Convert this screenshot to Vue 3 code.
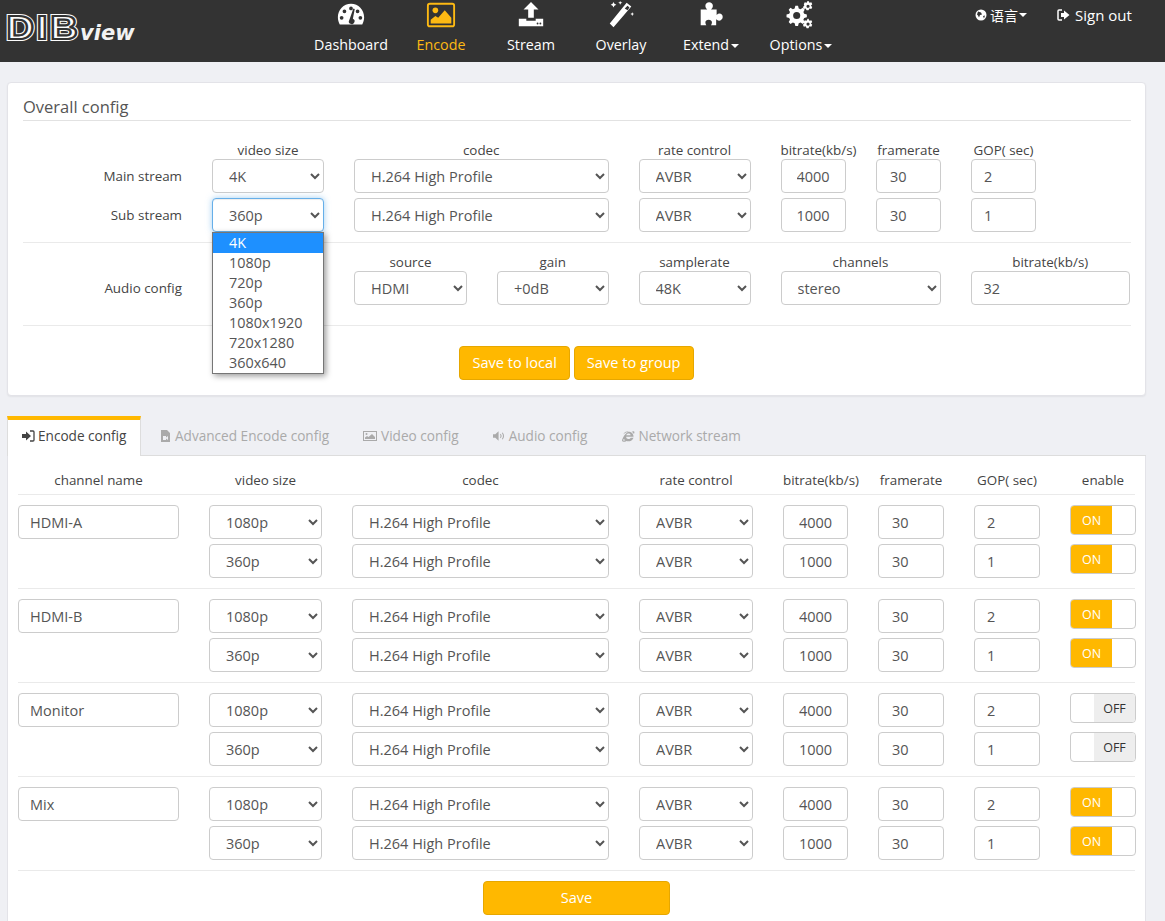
<script setup>
const sizes = ['4K', '1080p', '720p', '360p', '1080x1920', '720x1280', '360x640']
const topRows = [
  { label: 'Main stream', size: '4K', bitrate: 4000, gop: 2 },
  { label: 'Sub stream', size: '360p', bitrate: 1000, gop: 1, focus: true },
]
const tabs = [
  { label: 'Encode config', icon: 'enter', active: true },
  { label: 'Advanced Encode config', icon: 'file' },
  { label: 'Video config', icon: 'image' },
  { label: 'Audio config', icon: 'sound' },
  { label: 'Network stream', icon: 'ie' },
]
const channels = [
  { name: 'HDMI-A', on: true },
  { name: 'HDMI-B', on: true },
  { name: 'Monitor', on: false },
  { name: 'Mix', on: true },
]
const streams = [
  { size: '1080p', bitrate: 4000, gop: 2 },
  { size: '360p', bitrate: 1000, gop: 1 },
]
</script>

<template>
  <div class="page">
    <header class="nav">
      <div class="logo">
        <svg width="75" height="36" viewBox="0 0 75 36">
          <defs><text id="dib" x="0.500" y="29" class="dibtext">DIB</text></defs>
          <g transform="scale(1.12 1)">
            <use href="#dib" fill="#fff" stroke="#fff" stroke-width="4.200" />
            <use href="#dib" fill="none" stroke="#333" stroke-width="2.200" />
          </g>
        </svg>
        <span class="view">view</span>
      </div>
      <nav class="menu">
        <a class="item"><svg class="ico" viewBox="0 0 32 32"><path fill="#fff" fill-rule="evenodd" d="M16 4C8 4 2 10.500 2 18.500c0 2.800.8 5.200 2 7.500h24c1.200-2.300 2-4.700 2-7.500C30 10.500 24 4 16 4ZM16 7a2 2 0 1 1 0 4 2 2 0 0 1 0-4ZM9 10a2 2 0 1 1 0 4 2 2 0 0 1 0-4ZM23 10a2 2 0 1 1 0 4 2 2 0 0 1 0-4ZM6 17a2 2 0 1 1 0 4 2 2 0 0 1 0-4ZM26 17a2 2 0 1 1 0 4 2 2 0 0 1 0-4ZM18.500 9l1.500.5-2 10.500a3 3 0 1 1-3.800 1.200Z"/></svg><span>Dashboard</span></a>
        <a class="item active"><svg class="ico" viewBox="0 0 32 32"><rect x="2" y="4" width="28" height="24" rx="2" fill="none" stroke="#fdb913" stroke-width="2"/><circle cx="10" cy="11" r="3" fill="#fdb913"/><path fill="#fdb913" d="M5 25v-4l5-4 3 2 7-8 7 8v6Z"/></svg><span>Encode</span></a>
        <a class="item"><svg class="ico" viewBox="0 0 32 32"><path fill="#fff" d="M16 2l8 8h-5v9h-6v-9H8ZM3 20h8v2h10v-2h8v8H3Z"/><circle cx="23" cy="25" r="1" fill="#333"/><circle cx="26" cy="25" r="1" fill="#333"/></svg><span>Stream</span></a>
        <a class="item"><svg class="ico" viewBox="0 0 32 32"><path fill="#fff" d="M22 3l5 4L8 29l-4-4ZM20 9l3 2 2-3-2-2Z"/><path fill="#fff" d="M8 2l1 2 2 1-2 1-1 2-1-2-2-1 2-1ZM15 1l1 1.500 1.500.5-1.500.5-1 1.500-.5-1.500L13 3l1.500-.5ZM28 13l.7 1.500 1.300.5-1.300.5-.7 1.500-.7-1.500-1.300-.5 1.300-.5Z"/></svg><span>Overlay</span></a>
        <a class="item"><svg class="ico" viewBox="0 0 32 32"><path fill="#fff" d="M5 10h7c-1-1-2-2-2-4 0-2 2-3.500 4-3.500s4 1.500 4 3.500c0 2-1 3-2 4h6v6c1-1 2-1.500 3-1.500 2 0 3.500 1.500 3.500 3.500S26.500 22 24.500 22c-1 0-2-.5-3-1.500V27H16c.5-1 1-2 1-3 0-2-1.500-3-3.500-3S10 22 10 24c0 1 .5 2 1 3H5Z"/></svg><span>Extend<i class="caret"></i></span></a>
        <a class="item"><svg class="ico wide" viewBox="0 0 32 32"><path fill="#fff" fill-rule="evenodd" d="M12 8l1.500 0 .8 3 2 .9 2.700-1.500 2 2-1.500 2.700.9 2 3 .8v3l-3 .8-.9 2 1.500 2.700-2 2-2.700-1.500-2 .9-.8 3h-3l-.8-3-2-.9-2.700 1.500-2-2 1.500-2.700-.9-2-3-.8v-3l3-.8.9-2-1.500-2.700 2-2 2.700 1.500 2-.9.8-3ZM12 15a4 4 0 1 0 0 8 4 4 0 0 0 0-8Z" transform="translate(0 -1.500) scale(.95)"/><path fill="#fff" fill-rule="evenodd" d="M24 1l1 2 2-.5 1 2-1.500 1.500 1.500 1.500-1 2-2-.5-1 2h-2l-1-2-2 .5-1-2 1.500-1.500L19 4.500l1-2 2 .5 1-2ZM23.500 5a1.700 1.700 0 1 0 0 3.400 1.700 1.700 0 0 0 0-3.400ZM24 20l1 2 2-.5 1 2-1.500 1.500 1.500 1.500-1 2-2-.5-1 2h-2l-1-2-2 .5-1-2 1.500-1.500L19 23.500l1-2 2 .5 1-2ZM23.500 24a1.700 1.700 0 1 0 0 3.400 1.700 1.700 0 0 0 0-3.400Z"/></svg><span>Options<i class="caret"></i></span></a>
      </nav>
      <div class="right">
        <a class="lang"><svg width="12" height="12" viewBox="0 0 12 12"><circle cx="6" cy="6" r="5.500" fill="#fff"/><path fill="#333" d="M3 2.500l3 1 1 2-2 .5-1 2.500-1-2-1-1ZM8 7l2-.5-1 3Z"/></svg><span>语言</span><i class="caret"></i></a>
        <a class="signout"><svg width="13" height="12" viewBox="0 0 13 12"><path fill="none" stroke="#fff" stroke-width="1.500" d="M5 1H2a1 1 0 0 0-1 1v8a1 1 0 0 0 1 1h3"/><path fill="#fff" d="M7 1.500L12.500 6 7 10.500V8H4V4h3Z"/></svg><span>Sign out</span></a>
      </div>
    </header>

    <main class="main">
      <section class="card">
        <h2 class="title">Overall config</h2>
        <div class="topgrid heads">
          <span></span><span>video size</span><span>codec</span><span>rate control</span><span>bitrate(kb/s)</span><span>framerate</span><span>GOP( sec)</span>
        </div>
        <div v-for="r in topRows" :key="r.label" class="topgrid row">
          <label>{{ r.label }}</label>
          <div class="sizewrap">
            <select class="ctl" :class="{ focus: r.focus }"><option v-for="s in sizes" :key="s" :selected="s === r.size">{{ s }}</option></select>
          </div>
          <select class="ctl"><option>H.264 High Profile</option></select>
          <select class="ctl"><option>AVBR</option></select>
          <input class="ctl num" :value="r.bitrate" />
          <input class="ctl fr" value="30" />
          <input class="ctl" :value="r.gop" />
        </div>
        <hr class="sep first" />
        <div class="audio heads">
          <span></span><span></span><span>source</span><span>gain</span><span>samplerate</span><span>channels</span><span>bitrate(kb/s)</span>
        </div>
        <div class="audio row">
          <label>Audio config</label><span></span>
          <select class="ctl"><option>HDMI</option></select>
          <select class="ctl"><option>+0dB</option></select>
          <select class="ctl"><option>48K</option></select>
          <select class="ctl"><option>stereo</option></select>
          <input class="ctl" value="32" />
        </div>
        <hr class="sep second" />
        <div class="actions">
          <button class="btn">Save to local</button>
          <button class="btn">Save to group</button>
        </div>

        <ul class="dropdown">
          <li v-for="(s, i) in sizes" :key="s" :class="{ hl: i === 0 }">{{ s }}</li>
        </ul>
      </section>

      <div class="tabs">
        <a v-for="t in tabs" :key="t.label" class="tab" :class="{ active: t.active, wideg: t.icon === 'image' }">
          <svg v-if="t.icon === 'enter'" viewBox="0 0 13 12"><path fill="currentColor" d="M0 4h4V1.500L9 6l-5 4.500V8H0Z"/><path fill="none" stroke="currentColor" stroke-width="1.300" d="M8 1h3a1 1 0 0 1 1 1v8a1 1 0 0 1-1 1H8"/></svg>
          <svg v-else-if="t.icon === 'file'" viewBox="0 0 13 12"><path fill="currentColor" d="M2 0h6l3 3v9H2ZM4 6v4h3V8.500L9 10V6L7 7.500V6Z" fill-rule="evenodd"/></svg>
          <svg v-else-if="t.icon === 'image'" class="w14" viewBox="0 0 14 12"><path fill="currentColor" fill-rule="evenodd" d="M0 1h14v10H0ZM1 2v8h12V2Z"/><circle cx="3.500" cy="4" r="1" fill="currentColor"/><path fill="currentColor" d="M2 9V7.500L4 6l1.500 1L9 4l3 3v2Z"/></svg>
          <svg v-else-if="t.icon === 'sound'" viewBox="0 0 14 12"><path fill="currentColor" d="M0 4h2.500L6 1v10L2.500 8H0Z"/><path fill="none" stroke="currentColor" stroke-width="1.100" d="M8 4c.8 1 .8 3 0 4M10 2.500c1.500 2 1.500 5 0 7"/></svg>
          <svg v-else class="w14" viewBox="0 0 14 13"><path fill="currentColor" fill-rule="evenodd" d="M7.500 2C10.500 2 13 4.200 13 7.300H5c0 3 4 3 5 1h3c-1 3-4 4-5.500 4-.8 0-1.500-.2-2-.4C3.500 13 1 13.300 .6 12c-.3-1 .3-2.500 1-3.700C3 5.500 5 3.500 7 2.300 5 2.300 2.500 4 2 5c.3-2 3-4 5.500-3ZM5.100 5.800h4.800c-.2-2.500-4.300-2.500-4.800 0ZM2.300 9.800c-.8 1.500-.9 2.500 1.800 1.300-.8-.4-1.400-.9-1.800-1.300ZM11 2c1.500-1 3-1.200 3 .5 0 .5-.3 1.200-.5 1.800-.5-1-1.500-1.800-2.500-2.300Z"/></svg>
          <span>{{ t.label }}</span>
        </a>
      </div>
      <section class="panel">
        <div class="tablegrid heads">
          <span>channel name</span><span>video size</span><span>codec</span><span>rate control</span><span>bitrate(kb/s)</span><span>framerate</span><span>GOP( sec)</span><span>enable</span>
        </div>
        <div v-for="c in channels" :key="c.name" class="group">
          <div v-for="(s, i) in streams" :key="i" class="tablegrid line">
            <input v-if="i === 0" class="ctl name" :value="c.name" />
            <span v-else></span>
            <select class="ctl"><option>{{ s.size }}</option></select>
            <select class="ctl"><option>H.264 High Profile</option></select>
            <select class="ctl"><option>AVBR</option></select>
            <input class="ctl num" :value="s.bitrate" />
            <input class="ctl fr" value="30" />
            <input class="ctl" :value="s.gop" />
            <div class="switch" :class="c.on ? 'on' : 'off'">
              <b>{{ c.on ? 'ON' : 'OFF' }}</b>
            </div>
          </div>
        </div>
        <div class="saverow"><button class="btn save">Save</button></div>
      </section>
    </main>
  </div>
</template>

<style>
html, body { background: #eff0f4; }
</style>

<style scoped>
.page { font-family: "Open Sans", "Noto Sans CJK SC", sans-serif; font-size: 13.400px; color: #444; width: 1165px; height: 921px; overflow: hidden; background: #eff0f4; }
.nav { height: 62px; background: #333; display: flex; color: #fff; position: relative; }
.logo { width: 306px; padding: 10px 0 0 6px; display: flex; align-items: flex-start; box-sizing: border-box; }
.logo svg { display: block; flex: none; opacity: .99; }
.dibtext { font-family: "Liberation Sans", sans-serif; font-weight: 700; font-size: 34px; letter-spacing: 2.500px; }
.view { font-family: "DejaVu Sans", sans-serif; font-style: italic; font-weight: 700; font-size: 21px; color: #f2f2f2; margin: 11px 0 0 -1px; }
.menu { display: flex; }
.item { width: 90px; display: flex; flex-direction: column; align-items: center; font-size: 14.300px; white-space: nowrap; }
.item.active { color: #fdb913; }
.ico { width: 30px; height: 30px; margin-bottom: 5px; display: block; }
.ico.wide { width: 32px; }
.caret { display: inline-block; width: 0; height: 0; border: 4px solid transparent; border-top-color: currentColor; border-bottom: 0; margin-left: 2px; vertical-align: middle; }
.right { display: flex; position: absolute; left: 975px; top: 5px; align-items: center; font-size: 15px; gap: 30px; }
.lang, .signout { display: flex; align-items: center; gap: 3px; height: 20px; }
.lang { font-size: 14px; }
.lang .caret { margin-left: -2px; }
.signout { gap: 5px; }
.main { padding: 20px 19px 0 7px; }
.card { background: #fff; border: 1px solid #e3e3e8; border-radius: 4px; height: 314px; box-sizing: border-box; padding: 0 14px 0 15px; position: relative; box-shadow: 0 1px 2px rgba(0,0,0,.06); }
.title { margin: 0; padding: 12px 0 2px; height: 38px; box-sizing: border-box; font-size: 16.500px; font-weight: 400; line-height: 24px; border-bottom: 1px solid #e2e2e2; color: #555; }
.topgrid, .audio { display: grid; column-gap: 30px; align-items: center; margin-left: 1px; }
.topgrid { grid-template-columns: 158px 112px 254.500px 112px 65.500px 65px 65px; }
.audio { grid-template-columns: 158px 112px 113px 111.500px 112px 160px 159.500px; }
.heads { text-align: center; height: 20px; line-height: 20px; }
.card .topgrid.heads { margin-top: 18px; line-height: 22px; }
.row { height: 34px; margin-bottom: 5px; }
.row label { text-align: right; }
.sep { border: 0; border-top: 1px solid #eaeaea; margin: 0; }
.sep.first { margin-top: 10px; }
.audio.heads { margin-top: 8px; line-height: 22px; }
.sep.second { margin-top: 20px; }
.actions { display: flex; justify-content: center; gap: 4px; margin-top: 20px; margin-right: 1px; }
.ctl { box-sizing: border-box; width: 100%; height: 34px; padding: 6px 12px; border: 1px solid #ccc; border-radius: 4px; background: #fff; color: #555; font: 400 14.500px "Open Sans", sans-serif; display: block; }
input.num { padding-left: 15px; }
input.fr { padding-left: 13px; }
input.name { padding-left: 11px; }
.focus { border-color: #66afe9; box-shadow: inset 0 1px 1px rgba(0,0,0,.075), 0 0 6px rgba(102,175,233,.6); }
.btn { box-sizing: border-box; height: 34px; padding: 0 12px 2px; border: 1px solid #e6a700; border-radius: 4px; background: #ffb800; color: #fff; font: 400 14.600px "Open Sans", sans-serif; }
.dropdown { position: absolute; left: 204px; top: 149px; width: 112px; height: 142px; box-sizing: border-box; list-style: none; margin: 0; padding: 0; background: #fff; border: 1px solid #767676; box-shadow: 2px 2px 6px rgba(0,0,0,.4); font-size: 14.400px; line-height: 20px; color: #555; }
.dropdown li { padding-left: 16px; height: 20px; }
.dropdown li.hl { background: #1e90ff; color: #fff; }
.tabs { display: flex; margin-top: 20px; height: 40px; box-sizing: border-box; border-bottom: 1px solid #ddd; }
.tab { display: flex; align-items: center; gap: 3px; padding: 0 15px; margin-right: 4px; color: #aaa; font-size: 13.600px; box-sizing: border-box; white-space: nowrap; }
.tab.wideg { gap: 4px; }
.tab svg { width: 13px; height: 12px; flex: none; }
.tab svg.w14 { width: 14px; }
.tab.active { color: #444; background: #fff; border-top: 4px solid #ffb800; border-left: 1px solid #ddd; border-right: 1px solid #ddd; width: 134px; height: 40px; padding: 0 0 5px 14px; margin-right: 3px; }
.panel { background: #fff; border-left: 1px solid #e3e3e8; border-right: 1px solid #e3e3e8; padding: 0 10px; height: 466px; box-sizing: border-box; }
.tablegrid { display: grid; column-gap: 30px; align-items: center; grid-template-columns: 161px 113px 257px 114px 65px 66px 66px 66px; }
.panel .tablegrid.heads { height: 39px; padding-top: 9px; box-sizing: border-box; border-bottom: 1px solid #eaeaea; }
.group { height: 94px; box-sizing: border-box; padding-top: 10px; border-bottom: 1px solid #eaeaea; }
.line { height: 34px; margin-bottom: 5px; align-items: start; }
.switch { box-sizing: border-box; height: 30px; border: 1px solid #ccc; border-radius: 4px; background: #fff; overflow: hidden; display: flex; font-size: 12.500px; line-height: 29px; text-align: center; }
.switch b { font-weight: 400; display: block; width: 41px; }
.switch.on b { background: #ffb800; color: #fff; }
.switch.off { justify-content: flex-end; }
.switch.off b { background: #eee; color: #333; }
.saverow { display: flex; justify-content: center; margin-top: 10px; }
.btn.save { width: 187px; }
</style>
